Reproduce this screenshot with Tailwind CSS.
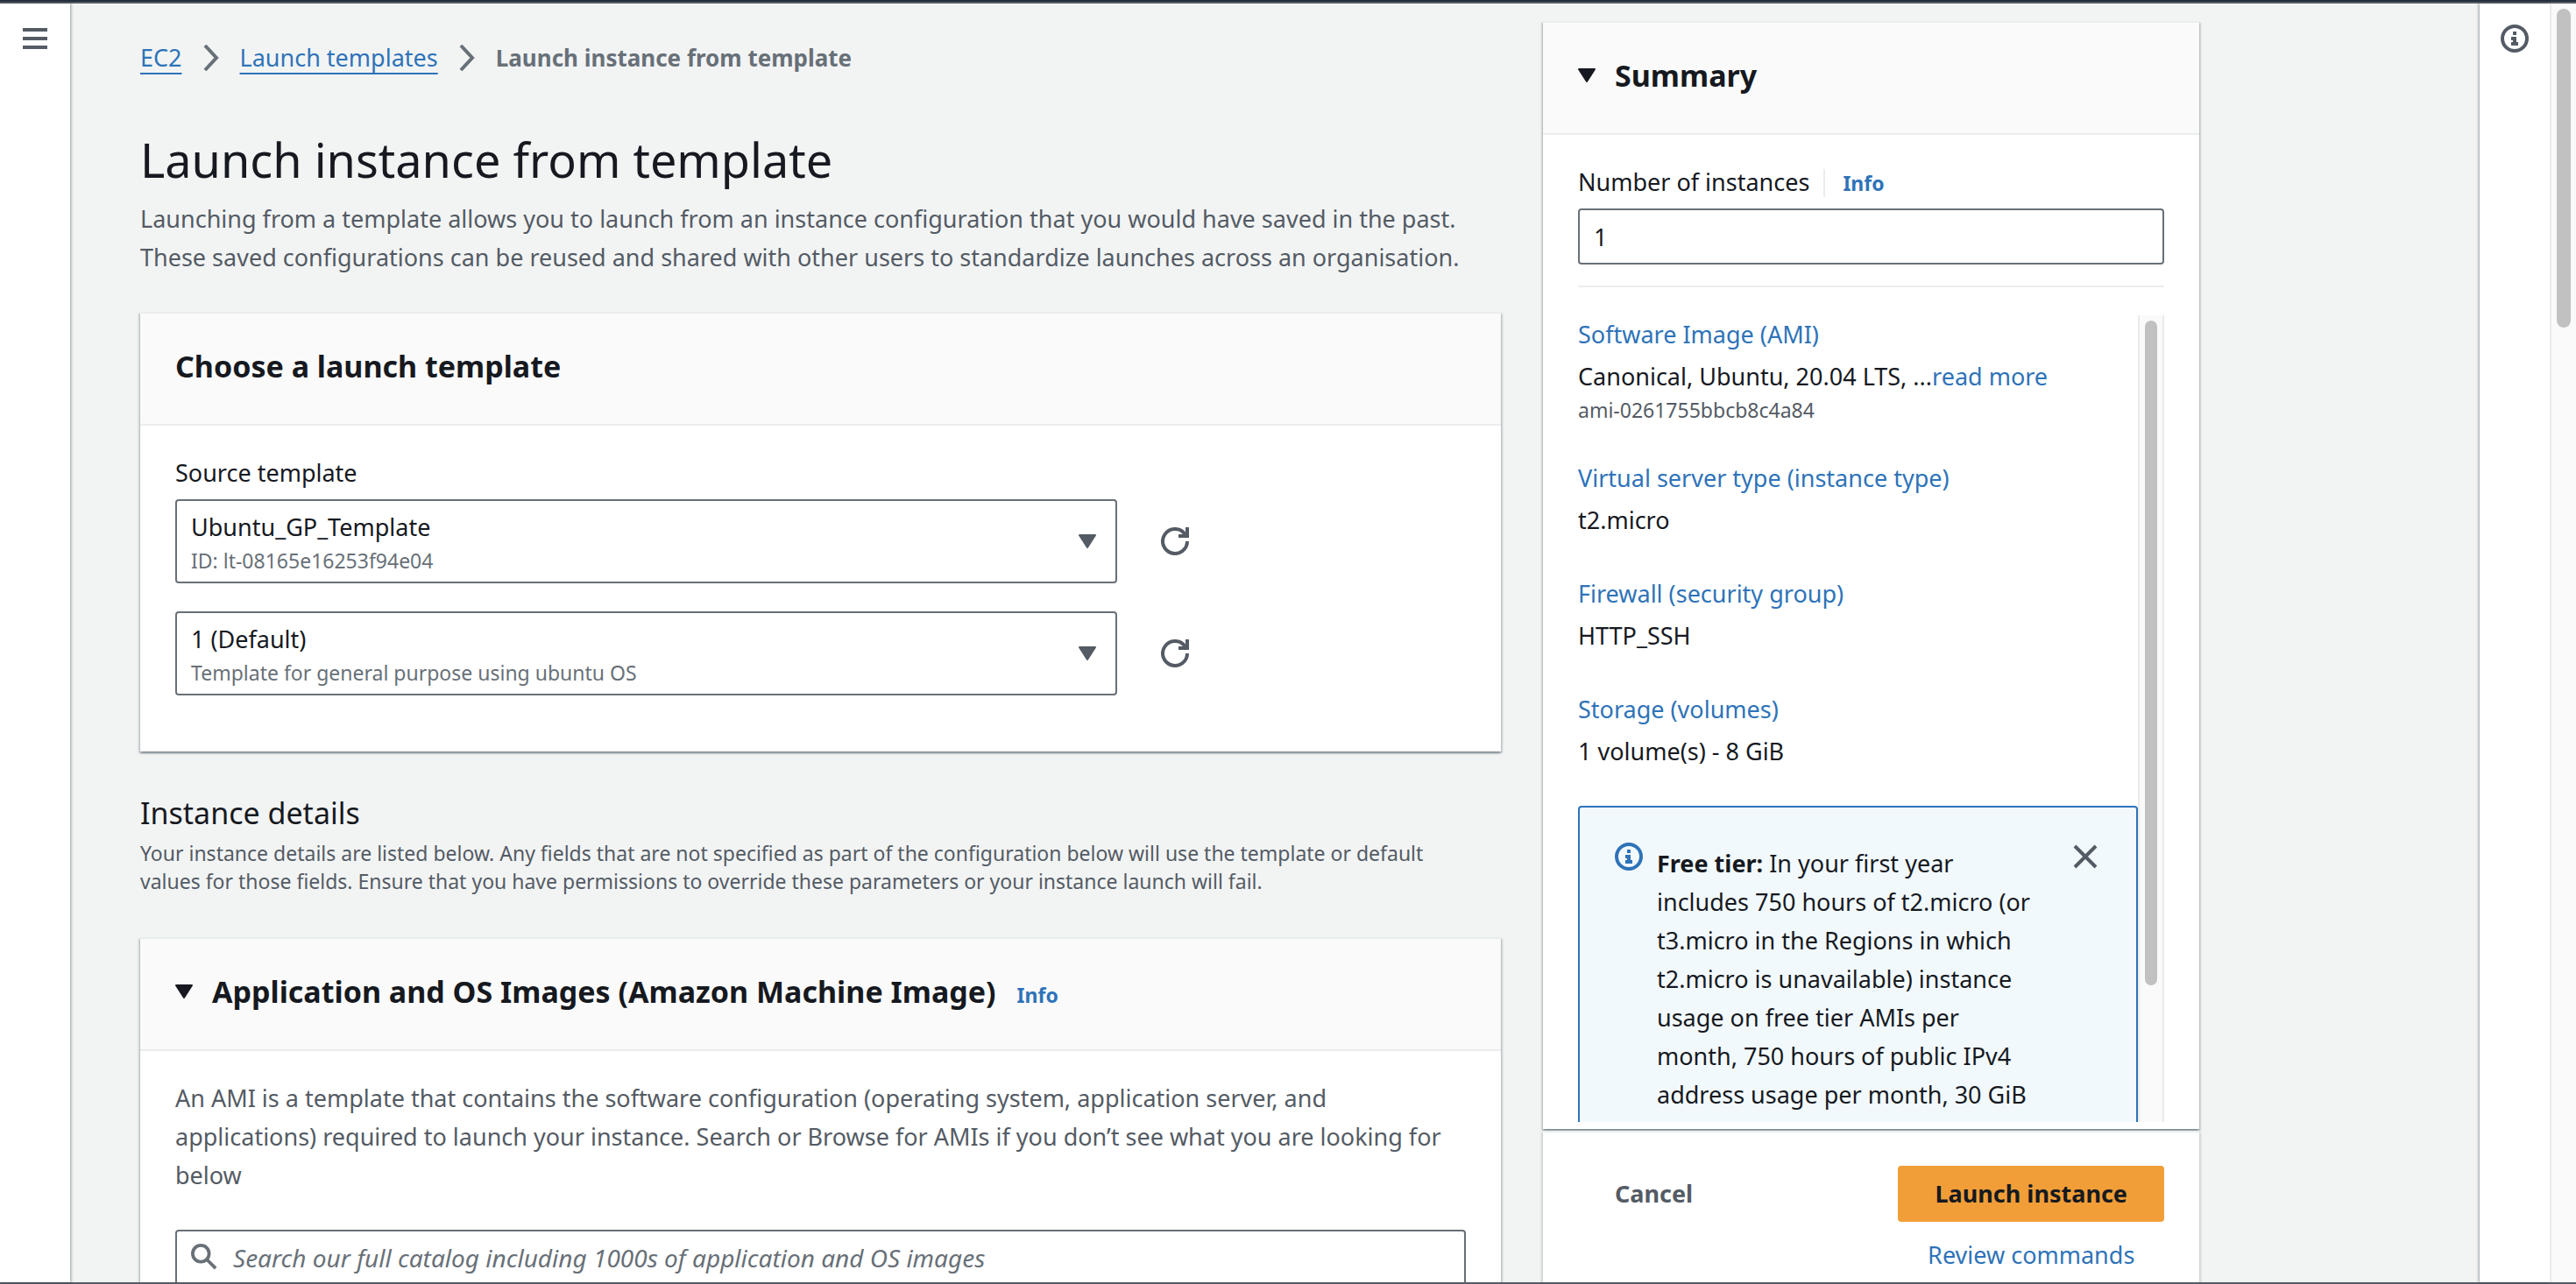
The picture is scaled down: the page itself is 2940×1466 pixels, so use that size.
<!DOCTYPE html>
<html lang="en">
<head>
<meta charset="utf-8">
<meta name="viewport" content="width=device-width, initial-scale=1">
<title>Launch instance from template | EC2</title>
<script src="https://cdn.jsdelivr.net/npm/@tailwindcss/browser@4"></script>
</head>
<body class="flex h-screen flex-col overflow-hidden border-t-2 border-[#232f3e] bg-[#f2f4f4] font-['Noto_Sans',sans-serif] text-[27px] leading-[44px] text-[#16191f]">
<svg class="hidden" aria-hidden="true">
  <symbol id="info" viewBox="0 0 32 32"><circle cx="16" cy="16" r="14" fill="none" stroke="currentColor" stroke-width="4"/><path fill="currentColor" d="M14 8h4v4h-4zM12 14h6v6h2v4h-8v-4h2v-2h-2z"/></symbol>
  <symbol id="caret" viewBox="0 0 20 16"><path fill="currentColor" stroke="currentColor" stroke-width="2" stroke-linejoin="round" d="M1 1h18l-9 14z"/></symbol>
  <symbol id="chevron" viewBox="0 0 18 30"><path fill="none" stroke="currentColor" stroke-width="4" d="M2 1l13 14L2 29"/></symbol>
  <symbol id="refresh" viewBox="0 0 32 32"><path fill="none" stroke="currentColor" stroke-width="4" d="M30 16A14 14 0 1 1 27.5 8M30 0v10H20"/></symbol>
  <symbol id="close" viewBox="0 0 28 28"><path fill="none" stroke="currentColor" stroke-width="4" d="M2 2l24 24M26 2L2 26"/></symbol>
  <symbol id="search" viewBox="0 0 32 32"><path fill="none" stroke="currentColor" stroke-width="4" d="M19.500 19.500L30 30"/><circle cx="12" cy="12" r="10" fill="none" stroke="currentColor" stroke-width="4"/></symbol>
</svg>

<div class="flex min-h-0 flex-1 border-y-2 border-[#545b64]">
  <!-- navigation rail -->
  <nav class="z-10 w-20 shrink-0 bg-white pt-7 shadow-[1px_0_3px_rgba(0,28,36,0.4)]">
    <button type="button" aria-label="Open navigation" class="mx-auto flex w-7 flex-col gap-1.5">
      <span class="h-1 bg-[#545b64]"></span><span class="h-1 bg-[#545b64]"></span><span class="h-1 bg-[#545b64]"></span>
    </button>
  </nav>

  <main class="min-w-0 flex-1 overflow-hidden pl-20">
    <div class="grid h-full max-w-[2350px] grid-cols-[minmax(0,1fr)_749px] grid-rows-[minmax(0,1fr)] gap-12">
      <div class="pt-10">
        <nav aria-label="Breadcrumb">
          <ol class="flex items-center gap-6 text-[#687078]">
            <li><a href="#" class="text-[#2e73b8] underline decoration-2 underline-offset-[7px] [text-decoration-skip-ink:none]">EC2</a></li>
            <li aria-hidden="true"><svg class="h-[30px] w-[18px]"><use href="#chevron"/></svg></li>
            <li><a href="#" class="text-[#2e73b8] underline decoration-2 underline-offset-[7px] [text-decoration-skip-ink:none]">Launch templates</a></li>
            <li aria-hidden="true"><svg class="h-[30px] w-[18px]"><use href="#chevron"/></svg></li>
            <li class="text-[26px] font-bold">Launch instance from template</li>
          </ol>
        </nav>
        <h1 class="mt-[58px] text-[54px] leading-[72px]">Launch instance from template</h1>
        <p class="mt-2.5 text-[#545b64]">Launching from a template allows you to launch from an instance configuration that you would have saved in the past. These saved configurations can be reused and shared with other users to standardize launches across an organisation.</p>

        <section class="mt-10 border-t-2 border-[#eaeded] bg-white shadow-[0_2px_2px_rgba(0,28,36,0.3),2px_2px_2px_rgba(0,28,36,0.15),-2px_2px_2px_rgba(0,28,36,0.15)]">
          <header class="border-b-2 border-[#eaeded] bg-[#fafafa] px-10 pt-[38px] pb-11">
            <h2 class="text-[34px] font-bold">Choose a launch template</h2>
          </header>
          <div class="px-10 pt-8 pb-16">
            <label for="source" class="block">Source template</label>
            <div class="mt-2 flex items-center gap-[50px]">
              <div class="relative w-[73%]">
                <select id="source" aria-describedby="source-id" class="block h-24 w-full appearance-none rounded-sm border-2 border-[#687078] bg-white px-4 pt-2 pb-10"><option>Ubuntu_GP_Template</option></select>
                <span id="source-id" class="pointer-events-none absolute bottom-2.5 left-[18px] text-[23px] leading-8 text-[#687078]">ID: lt-08165e16253f94e04</span>
                <svg class="pointer-events-none absolute top-10 right-6 h-4 w-5 text-[#545b64]"><use href="#caret"/></svg>
              </div>
              <button type="button" aria-label="Refresh templates" class="text-[#545b64]"><svg class="size-8"><use href="#refresh"/></svg></button>
            </div>
            <div class="mt-8 flex items-center gap-[50px]">
              <div class="relative w-[73%]">
                <select aria-label="Template version" aria-describedby="version-note" class="block h-24 w-full appearance-none rounded-sm border-2 border-[#687078] bg-white px-4 pt-2 pb-10"><option>1 (Default)</option></select>
                <span id="version-note" class="pointer-events-none absolute bottom-2.5 left-[18px] text-[23px] leading-8 text-[#687078]">Template for general purpose using ubuntu OS</span>
                <svg class="pointer-events-none absolute top-10 right-6 h-4 w-5 text-[#545b64]"><use href="#caret"/></svg>
              </div>
              <button type="button" aria-label="Refresh versions" class="text-[#545b64]"><svg class="size-8"><use href="#refresh"/></svg></button>
            </div>
          </div>
        </section>

        <h2 class="mt-12 text-[34px]">Instance details</h2>
        <p class="mt-2 pr-10 text-[23px] leading-8 text-[#545b64]">Your instance details are listed below. Any fields that are not specified as part of the configuration below will use the template or default values for those fields. Ensure that you have permissions to override these parameters or your instance launch will fail.</p>

        <section class="mt-12 border-t-2 border-[#eaeded] bg-white shadow-[0_2px_2px_rgba(0,28,36,0.3),2px_2px_2px_rgba(0,28,36,0.15),-2px_2px_2px_rgba(0,28,36,0.15)]">
          <header class="flex items-center gap-[22px] border-b-2 border-[#eaeded] bg-[#fafafa] px-10 pt-[38px] pb-11">
            <button type="button" aria-label="Collapse section" aria-expanded="true"><svg class="h-4 w-5"><use href="#caret"/></svg></button>
            <div class="flex items-baseline gap-6">
              <h2 class="text-[34px] font-bold">Application and OS Images (Amazon Machine Image)</h2>
              <a href="#" class="text-[23px] leading-8 font-bold text-[#2e73b8]">Info</a>
            </div>
          </header>
          <div class="px-10 pt-8 pb-10">
            <p class="text-[#545b64]">An AMI is a template that contains the software configuration (operating system, application server, and applications) required to launch your instance. Search or Browse for AMIs if you don’t see what you are looking for below</p>
            <div class="relative mt-10">
              <svg class="absolute top-4 left-[18px] size-[30px] text-[#687078]"><use href="#search"/></svg>
              <input type="search" aria-label="Search images" placeholder="Search our full catalog including 1000s of application and OS images" class="block h-16 w-full rounded-sm border-2 border-[#687078] bg-white pr-4 pl-16 text-[28px] placeholder:text-[#687078] placeholder:italic">
            </div>
          </div>
        </section>
      </div>

      <!-- summary column -->
      <aside class="flex min-h-0 flex-col pt-5">
        <section class="flex min-h-0 flex-1 flex-col border-t-2 border-[#eaeded] bg-white shadow-[0_2px_2px_rgba(0,28,36,0.3),2px_2px_2px_rgba(0,28,36,0.15),-2px_2px_2px_rgba(0,28,36,0.15)]">
          <header class="flex items-center gap-[22px] border-b-2 border-[#eaeded] bg-[#fafafa] px-10 pt-[38px] pb-11">
            <button type="button" aria-label="Collapse summary" aria-expanded="true"><svg class="h-4 w-5"><use href="#caret"/></svg></button>
            <h2 class="text-[34px] font-bold">Summary</h2>
          </header>
          <div class="flex min-h-0 flex-1 flex-col px-10 pt-8 pb-2">
            <div class="flex items-baseline">
              <label for="count">Number of instances</label>
              <a href="#" class="ml-4 border-l-2 border-[#eaeded] pl-5 text-[23px] leading-8 font-bold text-[#2e73b8]">Info</a>
            </div>
            <input id="count" type="text" inputmode="numeric" value="1" class="mt-2 block h-16 w-full shrink-0 rounded-sm border-2 border-[#687078] bg-white px-4">
            <hr class="mt-6 border-t-2 border-[#eaeded]">
            <div class="mt-8 flex min-h-0 flex-1">
              <div class="flex min-w-0 flex-1 flex-col gap-10 overflow-hidden">
                <div class="shrink-0">
                  <a href="#" class="text-[#2e73b8]">Software Image (AMI)</a>
                  <p class="mt-1">Canonical, Ubuntu, 20.04 LTS, ...<a href="#" class="text-[#2e73b8]">read more</a></p>
                  <p class="text-[23px] leading-8 text-[#545b64]">ami-0261755bbcb8c4a84</p>
                </div>
                <div class="shrink-0">
                  <a href="#" class="text-[#2e73b8]">Virtual server type (instance type)</a>
                  <p class="mt-1">t2.micro</p>
                </div>
                <div class="shrink-0">
                  <a href="#" class="text-[#2e73b8]">Firewall (security group)</a>
                  <p class="mt-1">HTTP_SSH</p>
                </div>
                <div class="shrink-0">
                  <a href="#" class="text-[#2e73b8]">Storage (volumes)</a>
                  <p class="mt-1">1 volume(s) - 8 GiB</p>
                </div>
                <div class="flex shrink-0 items-start rounded-sm border-2 border-[#2e73b8] bg-[#f2f9fd] px-10 py-10">
                  <svg class="size-8 shrink-0 text-[#2e73b8]"><use href="#info"/></svg>
                  <p class="mt-0.5 ml-4 min-w-0 flex-1"><b>Free tier:</b> In your first year includes 750 hours of t2.micro (or t3.micro in the Regions in which t2.micro is unavailable) instance usage on free tier AMIs per month, 750 hours of public IPv4 address usage per month, 30 GiB</p>
                  <button type="button" aria-label="Dismiss" class="mt-0.5 mr-1 ml-9 shrink-0 text-[#545b64]"><svg class="size-7"><use href="#close"/></svg></button>
                </div>
              </div>
              <div class="w-[30px] shrink-0 border-x-2 border-[#ebebeb] bg-[#fafafa] px-1.5 pt-1.5" aria-hidden="true">
                <div class="h-[83%] rounded-full bg-[#c1c1c1]"></div>
              </div>
            </div>
          </div>
        </section>
        <footer class="mt-0.5 flex shrink-0 items-start justify-between border-t-2 border-[#eaeded] bg-white px-10 pt-[38px] pb-[9px] shadow-[2px_2px_2px_rgba(0,28,36,0.15),-2px_2px_2px_rgba(0,28,36,0.15)]">
          <button type="button" class="h-16 px-[42px] font-bold text-[#545b64]">Cancel</button>
          <div class="flex flex-col items-center gap-4">
            <button type="button" class="h-16 rounded-sm bg-[#f19e38] px-[42px] font-bold">Launch instance</button>
            <a href="#" class="text-[#2e73b8]">Review commands</a>
          </div>
        </footer>
      </aside>
    </div>
  </main>

  <!-- help rail -->
  <div class="z-10 w-20 shrink-0 bg-white pt-6 shadow-[-1px_0_3px_rgba(0,28,36,0.4)]">
    <button type="button" aria-label="Open help panel" class="mx-auto block text-[#545b64]"><svg class="size-8"><use href="#info"/></svg></button>
  </div>
  <div class="z-10 w-[30px] shrink-0 border-l-2 border-[#ebebeb] bg-[#fafafa] px-1.5 pt-1.5" aria-hidden="true">
    <div class="h-1/4 w-4 rounded-full bg-[#c1c1c1]"></div>
  </div>
</div>
</body>
</html>
